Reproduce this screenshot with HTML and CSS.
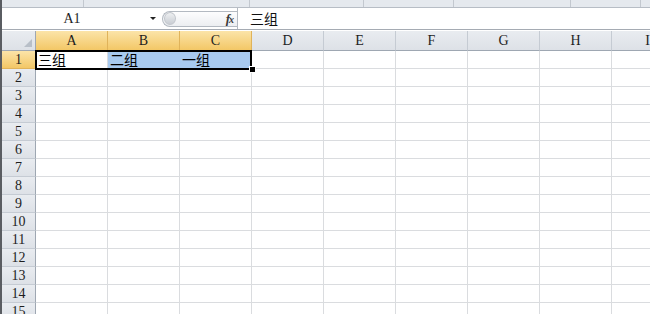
FILE: index.html
```html
<!DOCTYPE html>
<html lang="zh">
<head>
  <meta charset="UTF-8">
  <title>Sheet1</title>
  <link rel="stylesheet" href="styles.css">
</head>
<body>
  <div id="window">
    <div id="ribbonEdge">
      <span style="width:81px"></span>
      <span style="width:165px"></span>
      <span style="width:113px"></span>
      <span style="width:89px"></span>
      <span style="width:116px"></span>
      <span style="width:69px"></span>
    </div>

    <div id="formulaBar">
      <div class="name-box">
        <span class="name-text">A1</span>
        <span class="drop-arrow"></span>
      </div>
      <div class="fx-box">
        <span class="grip"></span>
        <span class="fx">f<i>x</i></span>
      </div>
      <div class="formula-input">三组</div>
    </div>

    <div id="sheet">
      <div class="row head">
        <div class="corner"><span class="corner-tri"></span></div>
        <div class="col-h sel">A</div>
        <div class="col-h sel">B</div>
        <div class="col-h sel">C</div>
        <div class="col-h">D</div>
        <div class="col-h">E</div>
        <div class="col-h">F</div>
        <div class="col-h">G</div>
        <div class="col-h">H</div>
        <div class="col-h">I</div>
      </div>
      <div class="row">
        <div class="row-h sel">1</div>
        <div class="cell active">三组</div>
        <div class="cell picked">二组</div>
        <div class="cell picked">一组</div>
        <div class="cell"></div><div class="cell"></div><div class="cell"></div><div class="cell"></div><div class="cell"></div><div class="cell"></div>
      </div>
      <div class="row"><div class="row-h">2</div><div class="cell"></div><div class="cell"></div><div class="cell"></div><div class="cell"></div><div class="cell"></div><div class="cell"></div><div class="cell"></div><div class="cell"></div><div class="cell"></div></div>
      <div class="row"><div class="row-h">3</div><div class="cell"></div><div class="cell"></div><div class="cell"></div><div class="cell"></div><div class="cell"></div><div class="cell"></div><div class="cell"></div><div class="cell"></div><div class="cell"></div></div>
      <div class="row"><div class="row-h">4</div><div class="cell"></div><div class="cell"></div><div class="cell"></div><div class="cell"></div><div class="cell"></div><div class="cell"></div><div class="cell"></div><div class="cell"></div><div class="cell"></div></div>
      <div class="row"><div class="row-h">5</div><div class="cell"></div><div class="cell"></div><div class="cell"></div><div class="cell"></div><div class="cell"></div><div class="cell"></div><div class="cell"></div><div class="cell"></div><div class="cell"></div></div>
      <div class="row"><div class="row-h">6</div><div class="cell"></div><div class="cell"></div><div class="cell"></div><div class="cell"></div><div class="cell"></div><div class="cell"></div><div class="cell"></div><div class="cell"></div><div class="cell"></div></div>
      <div class="row"><div class="row-h">7</div><div class="cell"></div><div class="cell"></div><div class="cell"></div><div class="cell"></div><div class="cell"></div><div class="cell"></div><div class="cell"></div><div class="cell"></div><div class="cell"></div></div>
      <div class="row"><div class="row-h">8</div><div class="cell"></div><div class="cell"></div><div class="cell"></div><div class="cell"></div><div class="cell"></div><div class="cell"></div><div class="cell"></div><div class="cell"></div><div class="cell"></div></div>
      <div class="row"><div class="row-h">9</div><div class="cell"></div><div class="cell"></div><div class="cell"></div><div class="cell"></div><div class="cell"></div><div class="cell"></div><div class="cell"></div><div class="cell"></div><div class="cell"></div></div>
      <div class="row"><div class="row-h">10</div><div class="cell"></div><div class="cell"></div><div class="cell"></div><div class="cell"></div><div class="cell"></div><div class="cell"></div><div class="cell"></div><div class="cell"></div><div class="cell"></div></div>
      <div class="row"><div class="row-h">11</div><div class="cell"></div><div class="cell"></div><div class="cell"></div><div class="cell"></div><div class="cell"></div><div class="cell"></div><div class="cell"></div><div class="cell"></div><div class="cell"></div></div>
      <div class="row"><div class="row-h">12</div><div class="cell"></div><div class="cell"></div><div class="cell"></div><div class="cell"></div><div class="cell"></div><div class="cell"></div><div class="cell"></div><div class="cell"></div><div class="cell"></div></div>
      <div class="row"><div class="row-h">13</div><div class="cell"></div><div class="cell"></div><div class="cell"></div><div class="cell"></div><div class="cell"></div><div class="cell"></div><div class="cell"></div><div class="cell"></div><div class="cell"></div></div>
      <div class="row"><div class="row-h">14</div><div class="cell"></div><div class="cell"></div><div class="cell"></div><div class="cell"></div><div class="cell"></div><div class="cell"></div><div class="cell"></div><div class="cell"></div><div class="cell"></div></div>
      <div class="row"><div class="row-h">15</div><div class="cell"></div><div class="cell"></div><div class="cell"></div><div class="cell"></div><div class="cell"></div><div class="cell"></div><div class="cell"></div><div class="cell"></div><div class="cell"></div></div>

      <div id="selection"></div>
      <div id="fillHandle"></div>
    </div>
  </div>
</body>
</html>
```

FILE: styles.css
```css
html, body {
  margin: 0;
  padding: 0;
  overflow: hidden;
  background: #fff;
}

#window {
  width: 648px;
  height: 314px;
  border-left: 2px solid #5a5d62;
  overflow: hidden;
  font-family: "Liberation Serif", "Noto Sans CJK SC", serif;
  color: #1e1e1e;
}

#ribbonEdge {
  display: flex;
  height: 7px;
  background: #e5e9ee;
  border-bottom: 1px solid #b7bdc5;
}

#ribbonEdge span {
  flex: none;
  border-right: 1px solid #c3c8cf;
}

#formulaBar {
  display: flex;
  align-items: center;
  height: 21px;
  border-bottom: 1px solid #a5abb3;
  margin-bottom: 1px;
  background: #fff;
}

.name-box {
  display: flex;
  align-items: center;
  width: 158px;
  height: 21px;
  flex: none;
}

.name-text {
  width: 140px;
  text-align: center;
  font-size: 14px;
}

.drop-arrow {
  width: 0;
  height: 0;
  border-left: 3px solid transparent;
  border-right: 3px solid transparent;
  border-top: 3px solid #222;
  margin-left: 8px;
}

.fx-box {
  display: flex;
  align-items: center;
  justify-content: space-between;
  width: 75px;
  height: 16px;
  margin-left: 2px;
  box-sizing: border-box;
  border: 1px solid #b3b9c1;
  border-right: none;
  border-radius: 9px 0 0 9px;
  background: linear-gradient(#fdfdfe, #eceef1);
  flex: none;
}

.grip {
  width: 12px;
  height: 13px;
  margin-left: 1px;
  border-radius: 50%;
  background: linear-gradient(#eef0f2, #c9cdd3);
  border: 1px solid #c2c6cc;
  box-sizing: border-box;
}

.fx {
  font-family: "Liberation Serif", serif;
  font-style: italic;
  font-weight: bold;
  font-size: 13px;
  color: #3a3a3a;
  margin-right: 4px;
  letter-spacing: -1px;
}

.fx i {
  font-size: 10px;
}

.formula-input {
  flex: 1;
  height: 21px;
  line-height: 21px;
  border-left: 1px solid #b3b9c1;
  padding-left: 12px;
  font-family: "Noto Sans CJK SC", sans-serif;
  font-size: 14px;
  color: #111;
}

#sheet {
  position: relative;
}

.row {
  display: flex;
  height: 18px;
}

.row.head {
  height: 20px;
}

.corner, .col-h, .row-h {
  flex: none;
  box-sizing: border-box;
  background: linear-gradient(#e9ecf0, #dde1e7);
  font-size: 14px;
  text-align: center;
}

.corner {
  position: relative;
  width: 34px;
  border-right: 1px solid #9ea7b2;
  border-bottom: 1px solid #9ea7b2;
}

.corner-tri {
  position: absolute;
  right: 3px;
  bottom: 3px;
  width: 0;
  height: 0;
  border-left: 8px solid transparent;
  border-bottom: 8px solid #b8bfc8;
}

.col-h {
  width: 72px;
  line-height: 19px;
  border-right: 1px solid #c5cbd3;
  border-bottom: 1px solid #9ea7b2;
}

.row-h {
  width: 34px;
  line-height: 17px;
  border-right: 1px solid #9ea7b2;
  border-bottom: 1px solid #c5cbd3;
}

.col-h.sel, .row-h.sel {
  background: linear-gradient(#fbe4a9, #f3c766);
  border-right-color: #e0b35a;
}

.row-h.sel {
  border-bottom-color: #e0b35a;
}

.cell {
  flex: none;
  width: 72px;
  box-sizing: border-box;
  border-right: 1px solid #dadcdf;
  border-bottom: 1px solid #dadcdf;
  padding-left: 2px;
  font-family: "Noto Sans CJK SC", sans-serif;
  font-size: 14px;
  line-height: 16px;
  white-space: nowrap;
  color: #000;
}

.cell.picked {
  background: #a8caef;
  border-right-color: #a8caef;
}

#selection {
  position: absolute;
  left: 33px;
  top: 19px;
  width: 217px;
  height: 20px;
  box-sizing: border-box;
  border: 2px solid #000;
  pointer-events: none;
}

#fillHandle {
  position: absolute;
  left: 247px;
  top: 35px;
  width: 5px;
  height: 5px;
  background: #000;
  border: 1px solid #fff;
}
```
